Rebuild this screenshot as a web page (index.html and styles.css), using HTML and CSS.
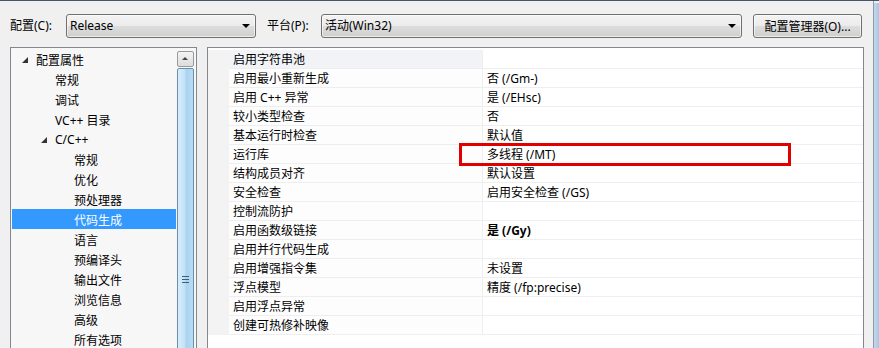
FILE: index.html
```html
<!DOCTYPE html>
<html lang="zh-CN">
<head>
    <meta charset="UTF-8">
    <title>属性页</title>
    <link rel="stylesheet" href="styles.css">
</head>
<body>
<div class="window">
    <div class="dialog">
        <div class="toolbar">
            <label class="field-label config-label">配置(C):</label>
            <div class="combo combo-config"><span>Release</span><i class="combo-arrow"></i></div>
            <label class="field-label platform-label">平台(P):</label>
            <div class="combo combo-platform"><span>活动(Win32)</span><i class="combo-arrow"></i></div>
            <button class="btn">配置管理器(O)...</button>
        </div>

        <div class="panes">
            <div class="tree">
                <ul class="tree-list">
                    <li class="node lv0"><i class="twisty"></i>配置属性</li>
                    <li class="node lv1">常规</li>
                    <li class="node lv1">调试</li>
                    <li class="node lv1">VC++ 目录</li>
                    <li class="node lv1"><i class="twisty"></i>C/C++</li>
                    <li class="node lv2">常规</li>
                    <li class="node lv2">优化</li>
                    <li class="node lv2">预处理器</li>
                    <li class="node lv2 selected">代码生成</li>
                    <li class="node lv2">语言</li>
                    <li class="node lv2">预编译头</li>
                    <li class="node lv2">输出文件</li>
                    <li class="node lv2">浏览信息</li>
                    <li class="node lv2">高级</li>
                    <li class="node lv2">所有选项</li>
                </ul>
                <div class="vscroll">
                    <div class="scroll-btn"><i class="up-arrow"></i></div>
                    <div class="scroll-thumb"><div class="grip"></div></div>
                </div>
            </div>

            <div class="props">
                <div class="grid">
                    <div class="row first"><span class="gutter"></span><span class="name">启用字符串池</span><span class="value"></span></div>
                    <div class="row"><span class="gutter"></span><span class="name">启用最小重新生成</span><span class="value">否 (/Gm-)</span></div>
                    <div class="row"><span class="gutter"></span><span class="name">启用 C++ 异常</span><span class="value">是 (/EHsc)</span></div>
                    <div class="row"><span class="gutter"></span><span class="name">较小类型检查</span><span class="value">否</span></div>
                    <div class="row"><span class="gutter"></span><span class="name">基本运行时检查</span><span class="value">默认值</span></div>
                    <div class="row"><span class="gutter"></span><span class="name">运行库</span><span class="value">多线程 (/MT)</span></div>
                    <div class="row"><span class="gutter"></span><span class="name">结构成员对齐</span><span class="value">默认设置</span></div>
                    <div class="row"><span class="gutter"></span><span class="name">安全检查</span><span class="value">启用安全检查 (/GS)</span></div>
                    <div class="row"><span class="gutter"></span><span class="name">控制流防护</span><span class="value"></span></div>
                    <div class="row"><span class="gutter"></span><span class="name">启用函数级链接</span><span class="value bold">是 (/Gy)</span></div>
                    <div class="row"><span class="gutter"></span><span class="name">启用并行代码生成</span><span class="value"></span></div>
                    <div class="row"><span class="gutter"></span><span class="name">启用增强指令集</span><span class="value">未设置</span></div>
                    <div class="row"><span class="gutter"></span><span class="name">浮点模型</span><span class="value">精度 (/fp:precise)</span></div>
                    <div class="row"><span class="gutter"></span><span class="name">启用浮点异常</span><span class="value"></span></div>
                    <div class="row"><span class="gutter"></span><span class="name">创建可热修补映像</span><span class="value"></span></div>
                </div>
                <!-- 标注框 -->
                <div class="highlight"></div>
            </div>
        </div>
    </div>
    <div class="frame-edge"></div>
</div>
</body>
</html>
```

FILE: styles.css
```css
* {
    box-sizing: border-box;
}

body {
    margin: 0;
    width: 879px;
    height: 348px;
    overflow: hidden;
    font-family: "Noto Sans", "Noto Sans CJK SC", sans-serif;
    font-size: 12px;
    color: #000;
    background: #f0f0f0;
}

.window {
    display: flex;
    height: 348px;
    border-top: 1px solid #44546a;
}

.dialog {
    width: 874px;
    border-right: 1px solid #8e9aa8;
    background: #f0f0f0;
}

.frame-edge {
    flex: 1;
    margin-top: 2px;
    background: linear-gradient(to right, #c4d8ec, #a9c6e4);
}

/* 上部のツールバー */
.toolbar {
    display: flex;
    align-items: center;
    height: 24px;
    margin-top: 13px;
    padding-left: 10px;
}

.field-label {
    line-height: 24px;
}

.config-label {
    width: 56px;
}

.platform-label {
    width: 54px;
    margin-left: 11px;
}

.combo {
    position: relative;
    height: 24px;
    line-height: 22px;
    padding-left: 3px;
    border: 1px solid #707070;
    border-radius: 3px;
    background: linear-gradient(to bottom, #f3f3f3 0%, #ebebeb 50%, #dddddd 51%, #cfcfcf 100%);
    box-shadow: inset 0 0 0 1px rgba(255, 255, 255, 0.6);
}

.combo-config {
    width: 190px;
}

.combo-platform {
    width: 421px;
}

.combo-arrow {
    position: absolute;
    right: 5px;
    top: 9px;
    width: 0;
    height: 0;
    border-left: 4px solid transparent;
    border-right: 4px solid transparent;
    border-top: 4px solid #000;
}

.btn {
    width: 109px;
    height: 24px;
    margin-left: 11px;
    padding: 0;
    font-family: inherit;
    font-size: 12px;
    color: #000;
    border: 1px solid #707070;
    border-radius: 3px;
    background: linear-gradient(to bottom, #f3f3f3 0%, #ebebeb 50%, #dddddd 51%, #cfcfcf 100%);
    box-shadow: inset 0 0 0 1px rgba(255, 255, 255, 0.6);
}

/* 下部の二つのパネル */
.panes {
    display: flex;
    height: 301px;
    margin-top: 9px;
    overflow: hidden;
}

.tree {
    display: flex;
    width: 187px;
    height: 320px;
    margin-left: 10px;
    border: 1px solid #828790;
    background: #f7f7f7;
}

.tree-list {
    flex: 1;
    margin: 0;
    padding: 1px 0 0;
    list-style: none;
}

.node {
    display: flex;
    align-items: center;
    height: 20px;
    margin: 0 1px;
    padding-top: 1px;
    white-space: nowrap;
}

.lv0 { padding-left: 24px; }
.lv1 { padding-left: 43px; }
.lv2 { padding-left: 62px; }

.node.selected {
    background: #3399ff;
    color: #fff;
}

.twisty {
    width: 0;
    height: 0;
    margin-left: -14px;
    margin-right: 8px;
    margin-top: 1px;
    border-left: 6px solid transparent;
    border-bottom: 6px solid #333;
}

.vscroll {
    width: 17px;
    margin: 3px 2px 0 0;
}

.scroll-btn {
    position: relative;
    height: 16px;
    border: 1px solid #9a9a9a;
    border-radius: 2px;
    background: linear-gradient(to bottom, #f4f4f4, #dcdcdc);
}

.up-arrow {
    position: absolute;
    left: 4px;
    top: 5px;
    width: 0;
    height: 0;
    border-left: 3px solid transparent;
    border-right: 3px solid transparent;
    border-bottom: 3px solid #444;
}

.scroll-thumb {
    position: relative;
    height: 300px;
    margin-top: 1px;
    border: 1px solid #6a8fae;
    border-radius: 2px;
    background: linear-gradient(to right, #d9edfa 0%, #c2e1f7 45%, #a8d3f0 55%, #b9dcf4 100%);
}

.grip {
    position: absolute;
    left: 4px;
    top: 207px;
    width: 7px;
    height: 9px;
    background: repeating-linear-gradient(to bottom, #3d5d7a 0, #3d5d7a 1px, transparent 1px, transparent 3px);
}

.props {
    position: relative;
    width: 657px;
    height: 320px;
    margin-left: 10px;
    padding-top: 2px;
    border: 1px solid #828790;
    background: #fff;
}

.row {
    display: grid;
    grid-template-columns: 21px 253px 1fr;
    height: 19px;
}

.gutter {
    background: #f3f3f3;
}

.name,
.value {
    padding-top: 1px;
    line-height: 18px;
    border-bottom: 1px solid #eeeeee;
    white-space: nowrap;
    overflow: hidden;
}

.name {
    padding-left: 4px;
    background: #fdfdfd;
}

.value {
    padding-left: 4px;
    border-left: 1px solid #efefef;
}

.row.first .name {
    background: #f1f3f7;
}

.bold {
    font-weight: bold;
}

.highlight {
    position: absolute;
    left: 251px;
    top: 95px;
    width: 332px;
    height: 23px;
    border: 3px solid #e10000;
}
```
